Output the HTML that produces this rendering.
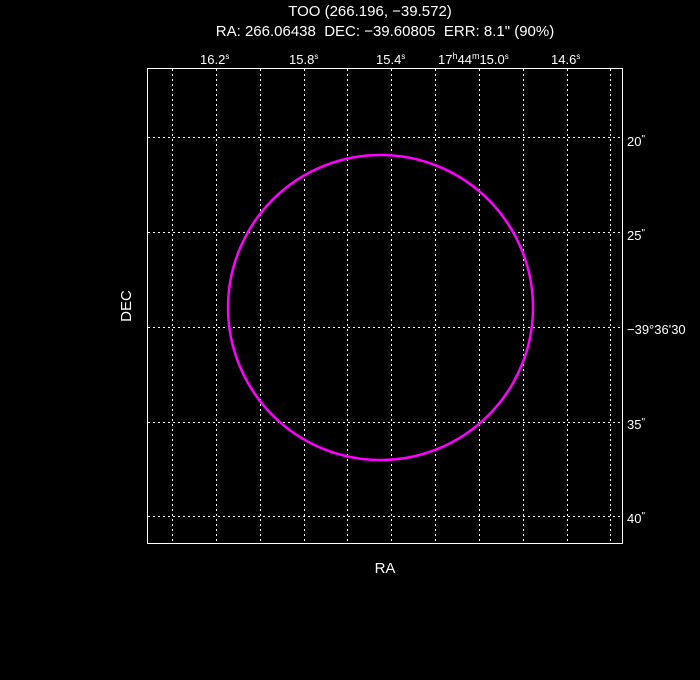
<!DOCTYPE html>
<html><head><meta charset="utf-8"><style>html,body{margin:0;padding:0;background:#000;}svg{display:block}</style></head>
<body>
<svg width="700" height="680" xmlns="http://www.w3.org/2000/svg" font-family="Liberation Sans, sans-serif" fill="#fff">
<rect width="700" height="680" fill="#000"/>
<g stroke="#fff" stroke-width="1" stroke-dasharray="2,3">
<line x1="172.5" y1="69" x2="172.5" y2="542"/>
<line x1="216.5" y1="69" x2="216.5" y2="542"/>
<line x1="260.5" y1="69" x2="260.5" y2="542"/>
<line x1="304.5" y1="69" x2="304.5" y2="542"/>
<line x1="347.5" y1="69" x2="347.5" y2="542"/>
<line x1="391.5" y1="69" x2="391.5" y2="542"/>
<line x1="435.5" y1="69" x2="435.5" y2="542"/>
<line x1="479.5" y1="69" x2="479.5" y2="542"/>
<line x1="523.5" y1="69" x2="523.5" y2="542"/>
<line x1="567.5" y1="69" x2="567.5" y2="542"/>
<line x1="610.5" y1="69" x2="610.5" y2="542"/>
<line x1="148" y1="137.5" x2="622" y2="137.5"/>
<line x1="148" y1="232.5" x2="622" y2="232.5"/>
<line x1="148" y1="327.5" x2="622" y2="327.5"/>
<line x1="148" y1="422.5" x2="622" y2="422.5"/>
<line x1="148" y1="516.5" x2="622" y2="516.5"/>
</g>
<rect x="147.5" y="68.5" width="475" height="475" fill="none" stroke="#fff" stroke-width="1"/>
<circle cx="380.5" cy="307.5" r="152.5" fill="none" stroke="#ff00ff" stroke-width="2.5"/>
<g font-size="15" text-anchor="middle">
<text x="370" y="16">TOO (266.196, −39.572)</text>
<text x="385" y="36" style="white-space:pre">RA: 266.06438  DEC: −39.60805  ERR: 8.1" (90%)</text>
</g>
<g font-size="13">
<text x="200" y="64">16.2<tspan font-size="8" dy="-5">s</tspan></text>
<text x="289" y="64">15.8<tspan font-size="8" dy="-5">s</tspan></text>
<text x="376" y="64">15.4<tspan font-size="8" dy="-5">s</tspan></text>
<text x="438" y="64">17<tspan font-size="9" dy="-5">h</tspan><tspan dy="5">44</tspan><tspan font-size="9" dy="-5">m</tspan><tspan dy="5">15.0</tspan><tspan font-size="8" dy="-5">s</tspan></text>
<text x="551" y="64">14.6<tspan font-size="8" dy="-5">s</tspan></text>
<text x="627" y="146">20<tspan dy="-4" font-size="10">"</tspan></text>
<text x="627" y="240">25<tspan dy="-4" font-size="10">"</tspan></text>
<text x="627" y="334">−39°36'30</text>
<text x="627" y="429">35<tspan dy="-4" font-size="10">"</tspan></text>
<text x="627" y="523">40<tspan dy="-4" font-size="10">"</tspan></text>
</g>
<text x="385" y="573" font-size="15" text-anchor="middle">RA</text>
<text transform="translate(131,306) rotate(-90)" font-size="15" text-anchor="middle">DEC</text>
</svg>
</body></html>
